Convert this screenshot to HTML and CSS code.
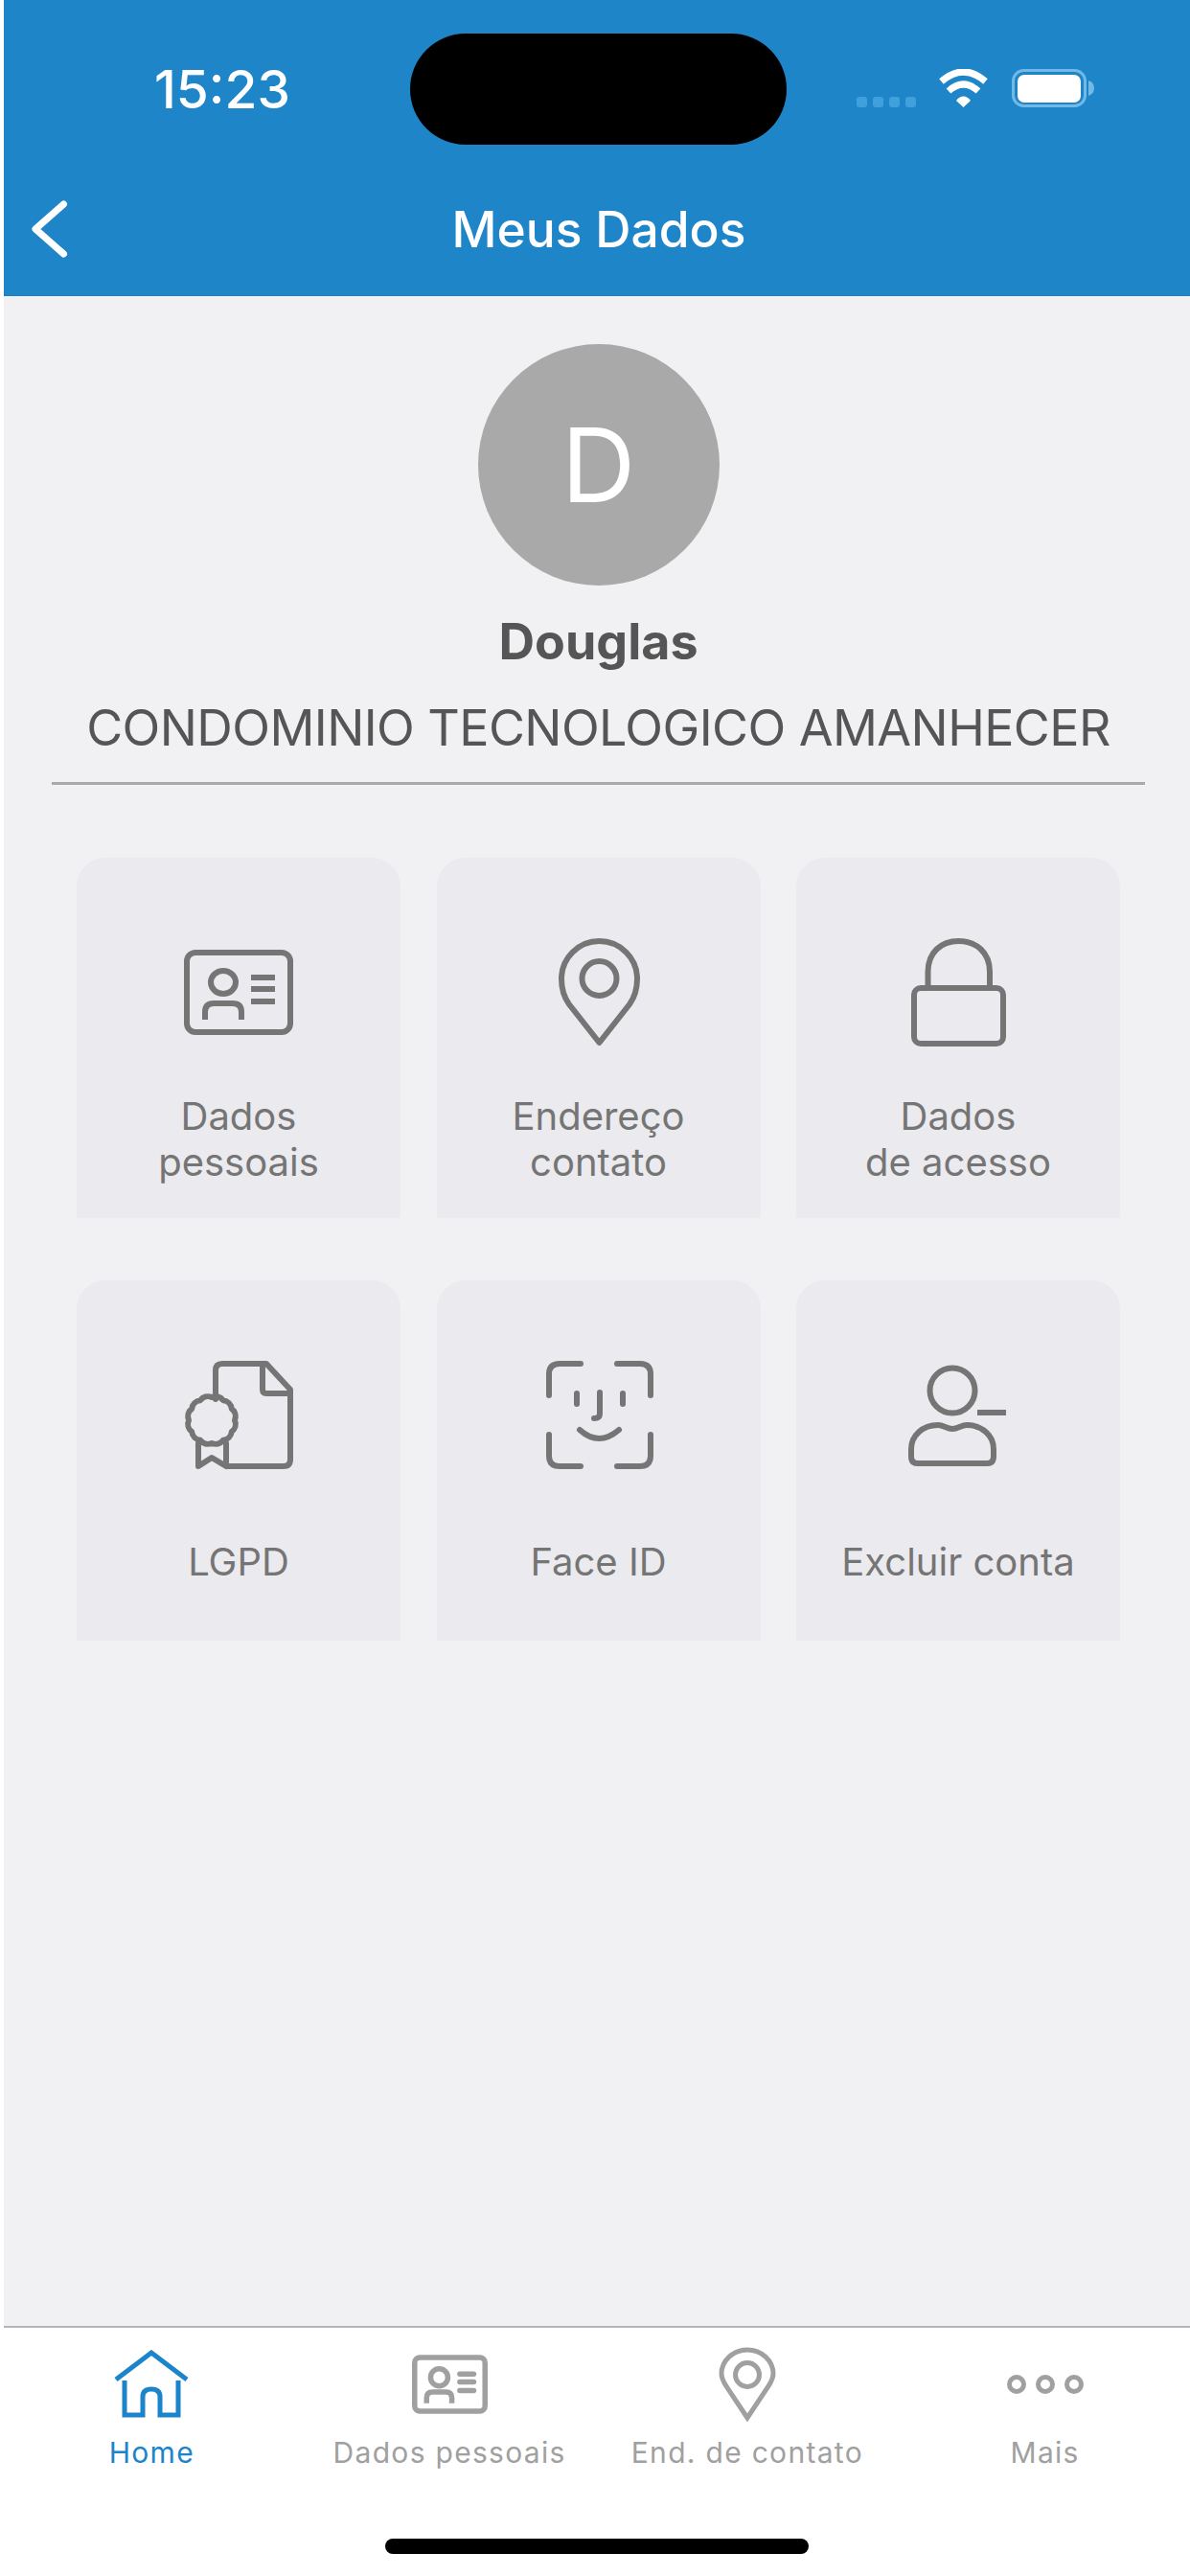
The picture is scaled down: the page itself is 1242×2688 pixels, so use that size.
FILE: index.html
```html
<!DOCTYPE html>
<html lang="en">
<head>
    <meta charset="UTF-8">
    <meta name="viewport" content="width=device-width, initial-scale=1.0">
    <title>Meus Dados</title>
    <link rel="stylesheet" href="styles.css">
</head>
<body>
    <header class="header">
        <div class="status-bar">
            <span class="time">15:23</span>
            <div class="island"></div>
            <svg class="status-icons" width="250" height="42" viewBox="0 0 250 42">
                <g fill="#3fa0dc">
                    <rect x="0" y="29" width="11" height="11" rx="3"/>
                    <rect x="17" y="29" width="11" height="11" rx="3"/>
                    <rect x="34" y="29" width="11" height="11" rx="3"/>
                    <rect x="51" y="29" width="11" height="11" rx="3"/>
                </g>
                <g fill="none" stroke="#fff" stroke-width="7">
                    <path d="M88.5 13Q111.5 -7 134.5 13"/>
                    <path d="M96 23Q111.5 9 127 23"/>
                </g>
                <path d="M104 33L111.5 40L119 33C115 27 108 27 104 33Z" fill="#fff"/>
                <rect x="163.5" y="1.5" width="75" height="37" rx="11" fill="none" stroke="#72b9e6" stroke-width="3"/>
                <rect x="168" y="6" width="66" height="29" rx="7" fill="#fff"/>
                <path d="M242 12Q248 14 248 20Q248 26 242 28Z" fill="#72b9e6"/>
            </svg>
        </div>
        <div class="nav">
            <svg class="back" width="38" height="60" viewBox="0 0 38 60">
                <path d="M33.5 4L4 30L33.5 56" fill="none" stroke="#fff" stroke-width="7" stroke-linecap="round" stroke-linejoin="round"/>
            </svg>
            <h1 class="title">Meus Dados</h1>
        </div>
    </header>

    <main class="main">
        <div class="profile">
            <div class="avatar">D</div>
            <div class="name">Douglas</div>
            <div class="condo">CONDOMINIO TECNOLOGICO AMANHECER</div>
        </div>

        <div class="cards">
            <div class="card">
                <svg class="card-icon" width="114" height="114" viewBox="0 0 114 114">
                    <rect x="3" y="15" width="108" height="83" rx="9"/>
                    <ellipse cx="41" cy="46" rx="13" ry="12"/>
                    <path class="square" d="M22 85V77Q22 68 31 68H51Q60 68 60 77V85"/>
                    <path class="square" d="M70 41H95M70 53H95M70 66H95"/>
                </svg>
                <div class="card-label">Dados<br>pessoais</div>
            </div>
            <div class="card">
                <svg class="card-icon" width="114" height="114" viewBox="0 0 114 114">
                    <path d="M57.5 109L26 69C21 62 18 52 18 42.5A39.5 39.5 0 0 1 97 42.5C97 52 94 62 89 69Z"/>
                    <circle cx="57.5" cy="42" r="18"/>
                </svg>
                <div class="card-label">Endereço<br>contato</div>
            </div>
            <div class="card">
                <svg class="card-icon" width="114" height="114" viewBox="0 0 114 114">
                    <rect x="11" y="52" width="93" height="58" rx="7"/>
                    <path d="M25.5 50V35C25.5 15 39 3 57.5 3C76 3 90 15 90 35V50"/>
                </svg>
                <div class="card-label">Dados<br>de acesso</div>
            </div>
            <div class="card">
                <svg class="card-icon" width="114" height="114" viewBox="0 0 114 114">
                    <path d="M33 40V10Q33 3 40 3H86L111 30V103Q111 110 104 110H46"/>
                    <path d="M82 4V30Q82 34 86 34H111"/>
                    <path d="M53 62A10 10 0 0 0 49.8 50A10 10 0 0 0 41 41.2A10 10 0 0 0 29 38A10 10 0 0 0 17 41.2A10 10 0 0 0 8.2 50A10 10 0 0 0 5 62A10 10 0 0 0 8.2 74A10 10 0 0 0 17 82.8A10 10 0 0 0 29 86A10 10 0 0 0 41 82.8A10 10 0 0 0 49.8 74A10 10 0 0 0 53 62Z"/>
                    <path d="M15 86V110L29 101L44 110V86"/>
                </svg>
                <div class="card-label">LGPD</div>
            </div>
            <div class="card">
                <svg class="card-icon" width="114" height="114" viewBox="0 0 114 114">
                    <path d="M5 36V14Q5 3 16 3H38M76 3H100Q111 3 111 14V36M5 77V99Q5 110 16 110H38M76 110H100Q111 110 111 99V77"/>
                    <path d="M34 34V45M82 34V45"/>
                    <path d="M58 33V55Q58 60 52 60"/>
                    <path d="M37 72Q57 90 78 72"/>
                </svg>
                <div class="card-label">Face ID</div>
            </div>
            <div class="card">
                <svg class="card-icon" width="114" height="114" viewBox="0 0 114 114">
                    <circle cx="51" cy="31" r="23.5"/>
                    <path d="M15 107Q8 107 8 100V92C8 78 20 67 36 67C42 67 45 71 51 71C57 71 60 67 66 67C82 67 94 78 94 92V100Q94 107 87 107Z"/>
                    <path class="square" d="M77 54H107"/>
                </svg>
                <div class="card-label">Excluir conta</div>
            </div>
        </div>
    </main>

    <footer class="tabbar">
        <nav class="tabs">
            <div class="tab active">
                <div class="tab-icon">
                    <svg width="80" height="72" viewBox="0 0 80 72">
                        <path d="M3 31L40 3L77 31"/>
                        <path d="M12 32V68H31V49C31 43 35 41 40 41C45 41 49 43 49 49V68H68V32"/>
                    </svg>
                </div>
                <span>Home</span>
            </div>
            <div class="tab">
                <div class="tab-icon">
                    <svg width="79" height="62" viewBox="0 12 114 89">
                        <g stroke-width="8">
                            <rect x="4" y="16" width="106" height="81" rx="8"/>
                            <ellipse cx="41" cy="46" rx="13" ry="13"/>
                            <path d="M22 85V77Q22 68 31 68H51Q60 68 60 77V85"/>
                            <path stroke-linecap="round" d="M72 41H93M72 53H93M72 66H93"/>
                        </g>
                    </svg>
                </div>
                <span>Dados pessoais</span>
            </div>
            <div class="tab">
                <div class="tab-icon">
                    <svg width="60" height="78" viewBox="0 0 60 78">
                        <path d="M30 74L8 41C5 36 3 33 3 28A27 25 0 0 1 57 28C57 33 55 36 52 41Z"/>
                        <circle cx="30" cy="29" r="12.5"/>
                    </svg>
                </div>
                <span>End. de contato</span>
            </div>
            <div class="tab">
                <div class="tab-icon">
                    <svg width="80" height="20" viewBox="0 0 80 20">
                        <circle cx="10" cy="10" r="7.5"/>
                        <circle cx="40" cy="10" r="7.5"/>
                        <circle cx="70" cy="10" r="7.5"/>
                    </svg>
                </div>
                <span>Mais</span>
            </div>
        </nav>
        <div class="home-indicator"></div>
    </footer>
</body>
</html>
```

FILE: styles.css
```css
* {
    margin: 0;
    padding: 0;
    box-sizing: border-box;
}
body {
    display: flex;
    flex-direction: column;
    width: 1242px;
    height: 2688px;
    padding-left: 4px;
    overflow: hidden;
    background: #fff;
    font-family: Inter, "Liberation Sans", sans-serif;
}
.header {
    height: 309px;
    background: #1e85c8;
    border-bottom: 1px solid #1a7fc2;
}
.status-bar {
    display: flex;
    align-items: center;
    height: 116px;
    margin-top: 35px;
    padding-left: 157px;
}
.time {
    width: 267px;
    color: #fff;
    font-size: 55px;
    font-weight: 500;
}
.island {
    width: 393px;
    height: 116px;
    border-radius: 58px;
    background: #000;
}
.status-icons {
    margin-left: 73px;
}
.nav {
    display: grid;
    grid-template-columns: 1fr auto 1fr;
    align-items: center;
    height: 157px;
    padding: 18px 25px 0 29px;
}
.title {
    grid-column: 2;
    grid-row: 1;
    color: #fff;
    font-size: 51.5px;
    font-weight: 500;
}
.back {
    grid-column: 1;
    grid-row: 1;
}
.main {
    flex: 1;
    padding: 50px 47px 0 50px;
    background: #f1f1f4;
}
.profile {
    display: flex;
    flex-direction: column;
    align-items: center;
    padding-bottom: 25px;
    border-bottom: 3px solid #a9a9a9;
}
.avatar {
    display: flex;
    justify-content: center;
    align-items: center;
    width: 252px;
    height: 252px;
    border-radius: 50%;
    background: #a9a9a9;
    color: #fff;
    font-size: 107px;
    font-weight: 400;
}
.name {
    margin-top: 28px;
    color: #555;
    font-size: 52px;
    font-weight: 700;
    line-height: 62px;
}
.condo {
    margin-top: 28px;
    color: #555;
    font-size: 52px;
    font-weight: 400;
    letter-spacing: -0.6px;
    line-height: 62px;
    white-space: nowrap;
}
.cards {
    display: grid;
    grid-template-columns: repeat(3, 338px);
    grid-auto-rows: 376px;
    gap: 65px 37.5px;
    justify-content: center;
    margin-top: 76px;
}
.card {
    display: flex;
    flex-direction: column;
    align-items: center;
    padding-top: 84px;
    border-radius: 30px 30px 0 0;
    background: #ebebef;
}
.card-icon {
    overflow: visible;
    fill: none;
    stroke: #757575;
    stroke-width: 6;
    stroke-linecap: round;
    stroke-linejoin: round;
}
.card-icon .square {
    stroke-linecap: butt;
}
.card-label {
    display: flex;
    align-items: center;
    min-height: 96px;
    margin-top: 48px;
    color: #757575;
    font-size: 40px;
    font-weight: 400;
    line-height: 48px;
    text-align: center;
}
.tabbar {
    height: 261px;
    padding-top: 20px;
    border-top: 2px solid #b5b5b5;
    background: #fff;
}
.tabs {
    display: grid;
    grid-template-columns: repeat(4, 1fr);
    margin: 0 -4px 0 -1px;
}
.tab {
    display: flex;
    flex-direction: column;
    align-items: center;
    color: #a0a0a0;
    font-size: 30px;
    letter-spacing: 1.3px;
    line-height: 36px;
}
.tab.active {
    color: #1b84cb;
}
.tab-icon {
    display: flex;
    justify-content: center;
    align-items: center;
    height: 78px;
    margin-bottom: 14px;
}
.tab-icon svg {
    fill: none;
    stroke: currentColor;
    stroke-width: 5;
}
.home-indicator {
    width: 442px;
    height: 16px;
    margin: 72px auto 0;
    border-radius: 8px;
    background: #000;
}
```
